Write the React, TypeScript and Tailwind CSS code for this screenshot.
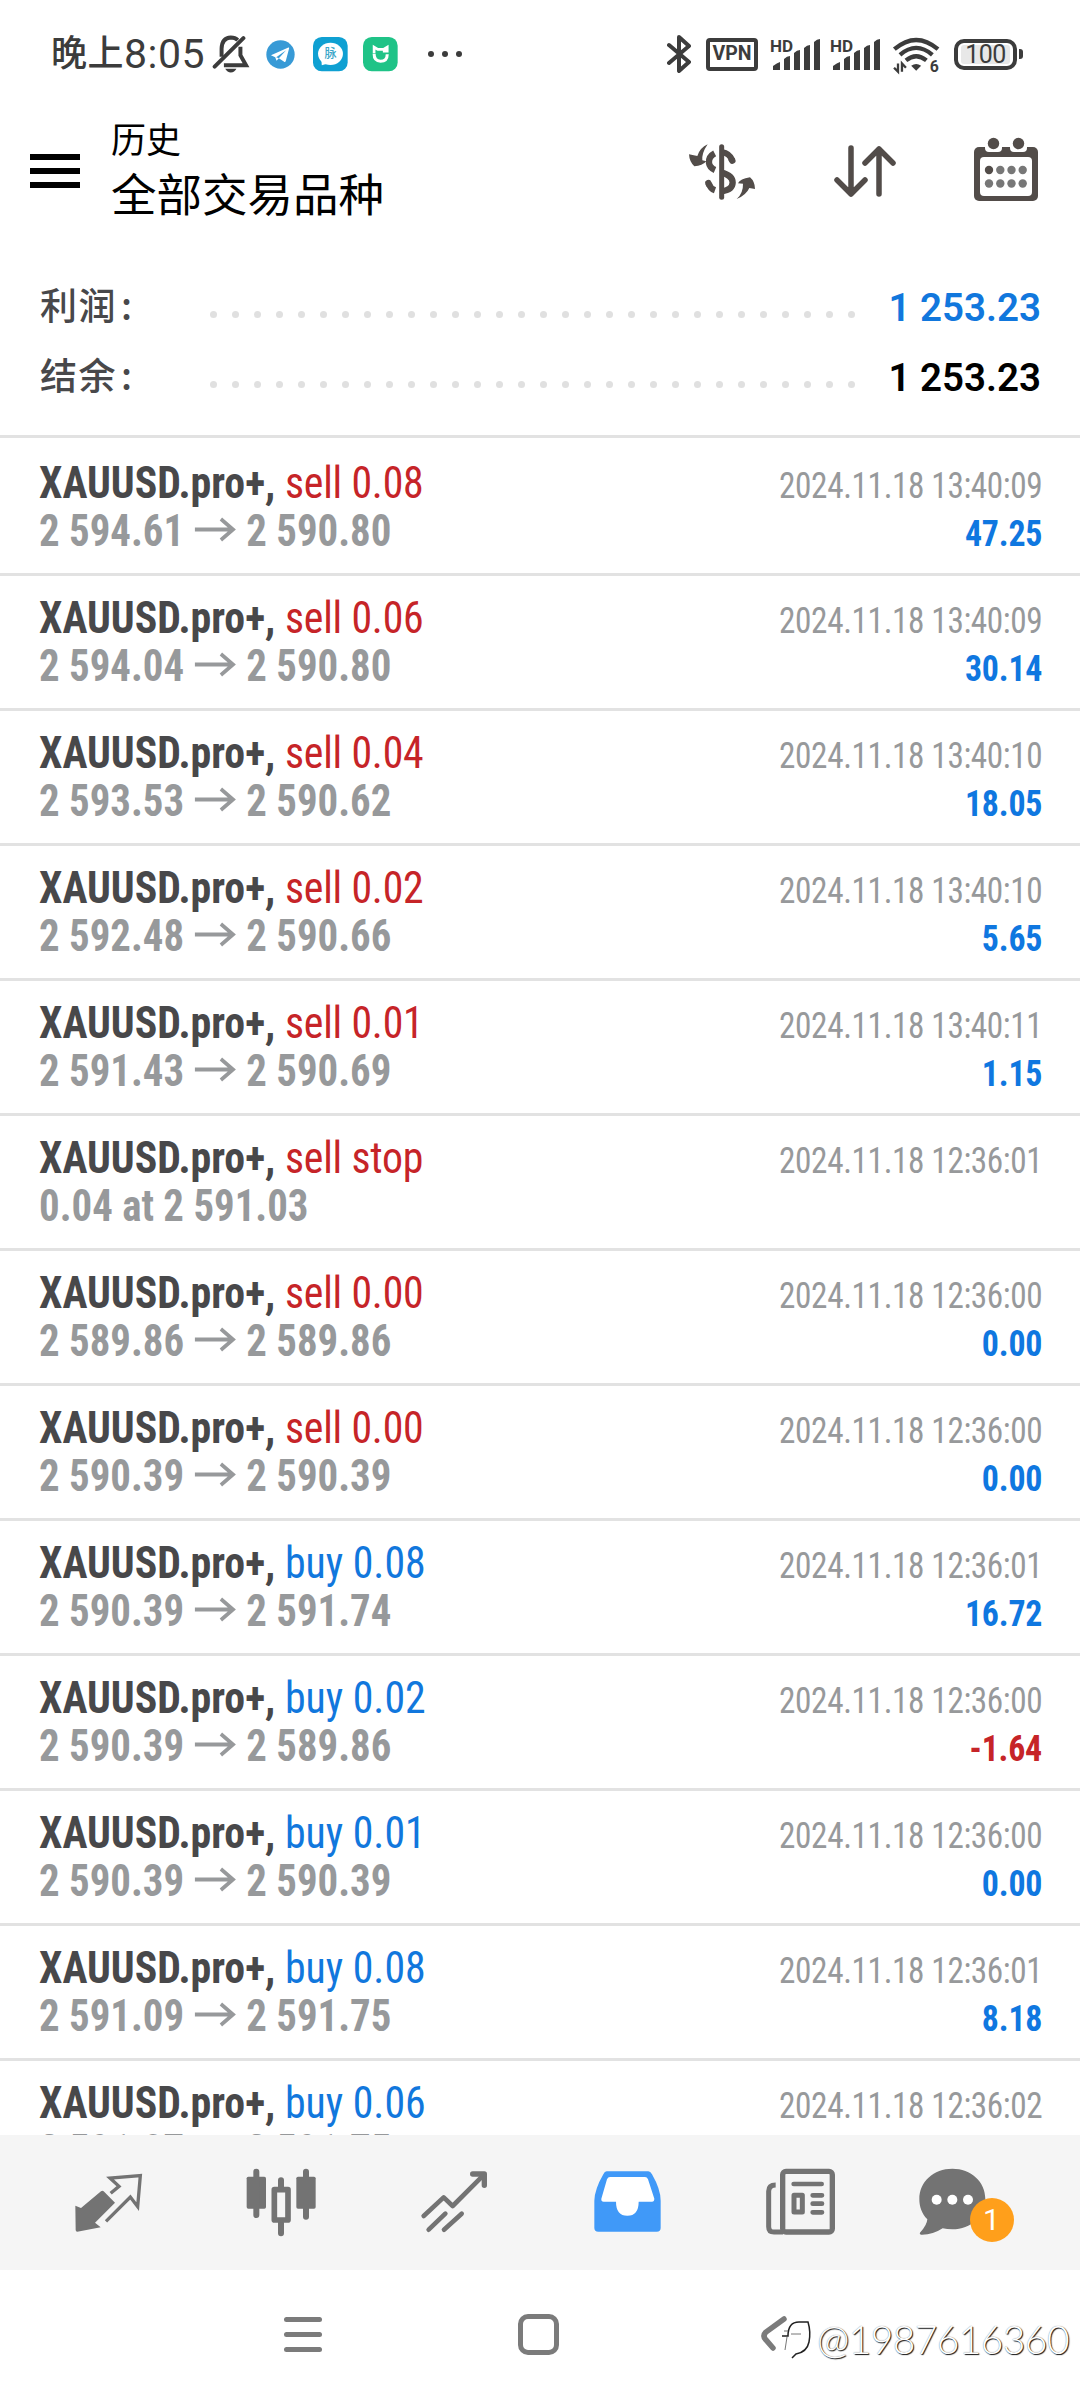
import type { ReactNode } from "react";
import clsx from "clsx";

type Deal = {
  side: "buy" | "sell";
  volume: string;
  open?: string;
  close?: string;
  note?: string;
  time: string;
  profit?: string;
};

const deals: Deal[] = [
  { side: "sell", volume: "0.08", open: "2 594.61", close: "2 590.80", time: "13:40:09", profit: "47.25" },
  { side: "sell", volume: "0.06", open: "2 594.04", close: "2 590.80", time: "13:40:09", profit: "30.14" },
  { side: "sell", volume: "0.04", open: "2 593.53", close: "2 590.62", time: "13:40:10", profit: "18.05" },
  { side: "sell", volume: "0.02", open: "2 592.48", close: "2 590.66", time: "13:40:10", profit: "5.65" },
  { side: "sell", volume: "0.01", open: "2 591.43", close: "2 590.69", time: "13:40:11", profit: "1.15" },
  { side: "sell", volume: "stop", note: "0.04 at 2 591.03", time: "12:36:01" },
  { side: "sell", volume: "0.00", open: "2 589.86", close: "2 589.86", time: "12:36:00", profit: "0.00" },
  { side: "sell", volume: "0.00", open: "2 590.39", close: "2 590.39", time: "12:36:00", profit: "0.00" },
  { side: "buy", volume: "0.08", open: "2 590.39", close: "2 591.74", time: "12:36:01", profit: "16.72" },
  { side: "buy", volume: "0.02", open: "2 590.39", close: "2 589.86", time: "12:36:00", profit: "-1.64" },
  { side: "buy", volume: "0.01", open: "2 590.39", close: "2 590.39", time: "12:36:00", profit: "0.00" },
  { side: "buy", volume: "0.08", open: "2 591.09", close: "2 591.75", time: "12:36:01", profit: "8.18" },
  { side: "buy", volume: "0.06", open: "2 591.07", close: "2 591.75", time: "12:36:02" },
];

function Signal() {
  return (
    <svg viewBox="0 0 50 36" className="h-9 w-[50px] overflow-visible fill-[#3c3c3c]">
      <text x="0" y="15.500" fontSize="17" className="font-['Roboto'] font-bold">HD</text>
      <path d="M3 34V30q4-3 7-4v8zM14 34V23q3-3 6-3v14zM24 34V17q3-3 6-3v20zM34 34V12q3-3 6-3v25zM44 34V6q3-3 6-3v31z" />
    </svg>
  );
}

function StatusBar() {
  return (
    <div className="flex h-[108px] shrink-0 items-center pl-[51px] pr-[57px] text-[#3c3c3c]">
      <span className="flex w-[161px] items-center whitespace-nowrap font-['Roboto','Noto_Sans_CJK_SC',sans-serif] text-[41px] leading-none tracking-[0.5px]">
        <span className="text-[36px] font-medium">晚上</span>8:05
      </span>

      {/* muted bell */}
      <svg viewBox="38 28 115 120" className="h-10 w-[38px]" fill="none" stroke="#3c3c3c" strokeWidth="12">
        <path d="M67 96V72Q68 39 95 38Q108 38 116 46M124 66V92L141 122H74" />
        <path d="M46 126L133 40" strokeLinecap="round" />
        <path d="M78 133H112Q106 144 95 144Q84 144 78 133Z" fill="#3c3c3c" stroke="none" />
      </svg>

      {/* telegram */}
      <svg viewBox="199 43 88 88" className="ml-4 h-[29px] w-[29px]">
        <circle cx="243" cy="87" r="43" fill="#389ad6" />
        <path d="M214 89L267 66Q270 65 269 69L259 107Q257 112 253 108L238 98L231 106L227 95Z" fill="#fff" />
        <path d="M230 95L260 74L238 98Z" fill="#389ad6" />
      </svg>

      <svg viewBox="341 36 104 104" className="ml-[18px] h-[35px] w-[35px]">
        <rect x="341" y="36" width="103" height="102" rx="26" fill="#0fa0d2" />
        <ellipse cx="393" cy="86" rx="37" ry="33" fill="#fff" />
        <path d="M366 104L367 120L388 114Z" fill="#fff" />
        <text x="393" y="99" textAnchor="middle" fontSize="36" fill="#3ba7c9" className="font-['Noto_Sans_CJK_SC',sans-serif] font-medium">脉</text>
      </svg>

      <svg viewBox="491 36 104 104" className="ml-[15px] h-[35px] w-[35px]">
        <rect x="491" y="36" width="103" height="102" rx="26" fill="#1fc387" />
        <path d="M524 84V66L535 73H552L563 66V78H550" fill="none" stroke="#fff" strokeWidth="8" />
        <path d="M524 86Q524 108 543 108Q563 108 563 87" fill="none" stroke="#fff" strokeWidth="9" />
      </svg>

      <span className="ml-[30px] flex gap-2">
        <i className="size-1.5 rounded-full bg-[#3c3c3c]" />
        <i className="size-1.5 rounded-full bg-[#3c3c3c]" />
        <i className="size-1.5 rounded-full bg-[#3c3c3c]" />
      </span>

      <div className="ml-auto flex items-center">
        {/* bluetooth */}
        <svg viewBox="0 0 24 38" className="h-[38px] w-6" fill="none" stroke="#3c3c3c" strokeWidth="4" strokeLinecap="round" strokeLinejoin="round">
          <path d="M2 10L22 27L12 36V2L22 11L2 28" />
        </svg>
        <span className="ml-[15px] flex h-[33px] w-[52px] items-center justify-center rounded-[4px] border-4 border-[#3c3c3c] font-['Roboto',sans-serif] text-[19.5px] font-bold leading-none">
          VPN
        </span>
        <span className="ml-3"><Signal /></span>
        <span className="ml-[10px]"><Signal /></span>

        {/* wifi 6 */}
        <svg viewBox="34 32 148 112" className="ml-3 h-[37px] w-[49px] overflow-visible" fill="none" stroke="#3c3c3c" strokeWidth="13">
          <path d="M41 72Q107 16 173 72M58 89Q107 47 156 89M76 106Q107 81 138 106" />
          <path d="M92 122Q107 111 122 122L107 137Z" fill="#3c3c3c" stroke="none" />
          <path d="M52 115V140L40 128M64 140V115L76 128" strokeWidth="7" />
          <text x="148" y="141" fontSize="48" fill="#3c3c3c" stroke="none" className="font-['Roboto',sans-serif] font-bold">6</text>
        </svg>

        <span className="ml-[13px] flex h-[31px] w-[63px] items-center justify-center rounded-[10px] border-4 border-[#3c3c3c]">
          <span className="flex h-[19px] w-[49px] items-center justify-center rounded-[3px] bg-[#e8e8e8] font-['Roboto',sans-serif] text-[25px] leading-none tracking-[-0.5px]">
            100
          </span>
        </span>
        <i className="ml-[2px] h-[10px] w-[4px] rounded-r-[3px] bg-[#3c3c3c]" />
      </div>
    </div>
  );
}

function Header() {
  return (
    <header className="flex h-[126px] shrink-0 items-center pl-[30px] pr-[41px]">
      <div className="flex w-[50px] flex-col gap-2">
        <i className="h-1.5 bg-black" />
        <i className="h-1.5 bg-black" />
        <i className="h-1.5 bg-black" />
      </div>
      <div className="mb-[8px] ml-[31px] font-['Noto_Sans_CJK_SC',sans-serif] text-black">
        <p className="text-[35px] leading-[50px]">历史</p>
        <h1 className="text-[45.5px] leading-[59px]">全部交易品种</h1>
      </div>

      <div className="ml-auto flex items-center">
        {/* currency */}
        <svg viewBox="0 0 270 240" className="h-20 w-[90px]" fill="none" stroke="#524c49" strokeWidth="19">
          <path d="M104 67Q85 77 87 96Q89 110 105 117M125 63Q149 67 157 88M86 157Q91 173 105 178M125 125Q158 134 158 155Q157 177 125 181" />
          <path d="M155 86L157 89M85 156L86 159" strokeLinecap="round" />
          <path d="M112 50V200" stroke="#fff" strokeWidth="5" />
          <path d="M125 47V199" strokeLinecap="round" strokeWidth="15" />
          <path d="M83 40Q60 50 52 75L27 70Q28 92 43 106Q67 105 79 91L67 88Q65 66 83 40ZM170 204Q190 186 189 158L174 157Q180 144 210 139Q225 152 225 174L208 171Q198 193 170 204Z" fill="#524c49" stroke="none" />
        </svg>

        {/* sort */}
        <svg viewBox="0 0 64 54" className="ml-[63px] h-[54px] w-16" fill="none" stroke="#524c49" strokeWidth="5.500" strokeLinecap="round" strokeLinejoin="round">
          <path d="M18 4V50M4 36L18 50L32 36M46 50V5M32 19L46 5L60 19" />
        </svg>

        {/* calendar */}
        <svg viewBox="0 0 66 66" className="mb-1 ml-[76px] h-[66px] w-[66px]">
          <rect x="1" y="11" width="64" height="54" rx="5" fill="#524c49" />
          <rect x="7" y="21" width="52" height="39" rx="4" fill="#fff" />
          <path d="M12 8h17v4q0 4-4 4H16q-4 0-4-4zM37 8h17v4q0 4-4 4H41q-4 0-4-4z" fill="#fff" />
          <circle cx="20.500" cy="7.500" r="5.700" fill="#524c49" />
          <circle cx="45.500" cy="7.500" r="5.700" fill="#524c49" />
          <circle cx="16" cy="34" r="4.200" fill="#524c49" />
          <g fill="#777">
            <circle cx="27.300" cy="34" r="4.200" />
            <circle cx="38.500" cy="34" r="4.200" />
            <circle cx="49.700" cy="34" r="4.200" />
            <circle cx="16" cy="47.500" r="4.200" />
            <circle cx="27.300" cy="47.500" r="4.200" />
            <circle cx="38.500" cy="47.500" r="4.200" />
            <circle cx="49.700" cy="47.500" r="4.200" />
          </g>
        </svg>
      </div>
    </header>
  );
}

function SummaryRow({ label, value, className }: { label: string; value: string; className: string }) {
  return (
    <div className="flex h-[70px] items-center">
      <span className="mb-[5px] w-[170px] font-['Noto_Sans_CJK_SC',sans-serif] text-[37px] font-medium tracking-[1.5px] text-[#48484a]">
        {label}
        <span className="ml-[4px]">:</span>
      </span>
      <span className="mt-[15px] flex w-[645px] justify-between">
        {Array.from({ length: 30 }, (_, i) => (
          <i key={i} className="size-[7px] rounded-full bg-[#e0e0e0]" />
        ))}
      </span>
      <span className={clsx("ml-auto mt-0.5 font-['Roboto',sans-serif] text-[38.5px] font-semibold", className)}>{value}</span>
    </div>
  );
}

function DealRow({ side, volume, open, close, note, time, profit }: Deal) {
  return (
    <li className="h-[135px] border-b-[3px] border-[#e2e2e2] pl-[39px] pr-[38px] pt-[18px] font-['Roboto_Condensed','Roboto',sans-serif]">
      <div className="flex h-12 items-baseline justify-between leading-[48px]">
        <span className="origin-left scale-x-[0.95] text-[44px] font-bold text-[#48484a]">
          XAUUSD.pro+,{" "}
          <span
            className={clsx(
              "font-normal",
              side === "sell" ? "tracking-[-0.2px] text-[#c62428]" : "text-[#1177dd]",
            )}
          >
            {side} {volume}
          </span>
        </span>
        <span className="origin-right scale-x-[0.91] text-[36.5px] tracking-[-0.4px] text-[#97999b]">2024.11.18 {time}</span>
      </div>
      <div className="flex h-12 items-baseline justify-between leading-[48px]">
        <span className="flex origin-left scale-x-[0.928] items-baseline text-[44px] font-bold text-[#97999b]">
          {note ?? (
            <>
              {open}
              <svg viewBox="0 0 43 24" className="mx-[12px] h-6 w-[43px] overflow-visible" fill="none" stroke="currentColor" strokeWidth="4">
                <path d="M0 7.500H41M28 -3L41 7.500L28 18" />
              </svg>
              {close}
            </>
          )}
        </span>
        {profit && (
          <span
            className={clsx(
              "origin-right scale-x-[0.94] text-[36px] font-bold tracking-[-0.2px]",
              profit.startsWith("-") ? "text-[#c62428]" : "text-[#0f77e0]",
            )}
          >
            {profit}
          </span>
        )}
      </div>
    </li>
  );
}

function Tab({ viewBox, children }: { viewBox: string; children: ReactNode }) {
  return (
    <svg viewBox={viewBox} className="h-[100px] w-[100px]" fill="none" stroke="#737373">
      {children}
    </svg>
  );
}

function TabBar() {
  return (
    <nav className="grid h-[135px] shrink-0 grid-cols-6 place-items-center bg-[#f5f5f5] px-[21px]">
      {/* quotes */}
      <Tab viewBox="174 637 300 300">
        <path d="M226 795L243 802L303 752Q307 748 311 752L345 786L285 846L302 860L232 873Q227 873 227 868Z" fill="#737373" stroke="none" />
        <path d="M332 758L357 737L330 712L421 705L413 798L391 769L318 842" strokeWidth="10" />
      </Tab>

      {/* chart */}
      <Tab viewBox="693 637 300 300">
        <g fill="#737373" stroke="none">
          <rect x="740" y="708" width="58" height="96" rx="5" />
          <rect x="889" y="708" width="58" height="96" rx="5" />
        </g>
        <path d="M769 693V823M918 693V828M843 719V740M843 846V878" strokeWidth="18" strokeLinecap="round" />
        <rect x="823" y="747" width="41" height="91" strokeWidth="17" strokeLinejoin="round" />
      </Tab>

      {/* trade */}
      <Tab viewBox="132 637 300 300">
        <path d="M191 826L251 770L278 796L372 702" strokeWidth="14" strokeLinecap="round" strokeLinejoin="round" />
        <path d="M338 700H373V734" strokeWidth="16" strokeLinecap="round" strokeLinejoin="round" />
        <path d="M206 867L256 819M252 867L305 819" strokeWidth="14" strokeLinecap="round" />
      </Tab>

      {/* history */}
      <Tab viewBox="651 637 300 300">
        <path
          d="M740 692H865Q871 692 876 701Q902 746 902 780V862Q902 873 890 873H715Q703 873 703 862V780Q704 746 730 701Q734 692 740 692Z"
          fill="#4099f8"
          stroke="none"
        />
        <path
          d="M750 709H855Q861 709 864 716L883 774Q883 783 876 783H836Q836 825 802 825Q768 825 768 783H731Q723 783 724 774L741 716Q744 709 750 709Z"
          fill="#fff"
          stroke="none"
        />
      </Tab>

      {/* news */}
      <Tab viewBox="91 637 300 300">
        <rect x="189" y="692" width="149" height="182" rx="10" strokeWidth="16" />
        <path d="M168 733Q147 733 147 752V858Q147 874 163 874H190" strokeWidth="15" />
        <path d="M222 730H306M279 764H307M279 789H307M279 815H307" strokeWidth="14" strokeLinecap="round" />
        <rect x="223" y="764" width="25" height="50" strokeWidth="15" strokeLinejoin="round" />
      </Tab>

      {/* mailbox */}
      <div className="relative">
        <svg viewBox="611 637 300 300" className="h-[100px] w-[100px] overflow-visible">
          <path
            d="M699 684C755 684 798 723 798 775C798 827 755 866 699 866Q683 866 670 863Q640 883 605 882Q599 880 603 875Q623 853 624 836C608 819 600 799 600 775C600 723 643 684 699 684Z"
            fill="#737373"
          />
          <circle cx="652" cy="777" r="15" fill="#fff" />
          <circle cx="699" cy="777" r="15" fill="#fff" />
          <circle cx="746" cy="777" r="15" fill="#fff" />
        </svg>
        <span className="absolute left-[47px] top-[45px] flex size-11 items-center justify-center rounded-full bg-[#ff9f1b] font-['Roboto',sans-serif] text-[30px] leading-none text-white">
          1
        </span>
      </div>
    </nav>
  );
}

function SystemNav() {
  return (
    <div className="relative flex h-[130px] shrink-0 items-center pb-[2px] pl-[284px]">
      <div className="flex w-[38px] flex-col gap-[10px]">
        <i className="h-[5px] rounded-full bg-[#7b7b7b]" />
        <i className="h-[5px] rounded-full bg-[#7b7b7b]" />
        <i className="h-[5px] rounded-full bg-[#7b7b7b]" />
      </div>
      <i className="ml-[196px] size-[41px] rounded-[10px] border-[5px] border-[#7b7b7b]" />
      <svg viewBox="0 0 28 38" className="ml-[201px] h-[38px] w-7" fill="none" stroke="#7b7b7b" strokeWidth="5.500" strokeLinecap="round">
        <path d="M24 4L6 17Q2 21 6 25L13 33" />
      </svg>

      {/* user tag over the corner */}
      <div className="absolute left-[779px] top-[41px] flex items-center text-white">
        <svg viewBox="0 0 36 44" className="h-11 w-9" fill="none">
          <path d="M3 19H9Q9 5 20 5H29Q32 15 30 25Q28 35 17 37L13 41" stroke="#222" strokeWidth="1.500" />
          <path d="M5 14H9M12 17H22M6 33L8 20" stroke="#777" strokeWidth="1" />
        </svg>
        <span className="ml-[2px] whitespace-nowrap font-['Lato',sans-serif] text-[39px] font-light leading-[56px] tracking-[-0.6px] [text-shadow:1px_1px_1px_#111,0_0_1px_#777]">
          @1987616360
        </span>
      </div>
    </div>
  );
}

export default function App() {
  return (
    <div className="flex h-[2400px] w-[1080px] flex-col overflow-hidden bg-white">
      <StatusBar />
      <Header />

      <section className="shrink-0 pb-[23px] pl-10 pr-[39px] pt-[38px]">
        <SummaryRow label="利润" value="1 253.23" className="text-[#1177dd]" />
        <SummaryRow label="结余" value="1 253.23" className="text-black" />
      </section>

      <ul className="min-h-0 flex-1 overflow-hidden border-t-[3px] border-[#e2e2e2] pt-[3px]">
        {deals.map((deal, i) => (
          <DealRow key={i} {...deal} />
        ))}
      </ul>

      <TabBar />
      <SystemNav />
    </div>
  );
}
